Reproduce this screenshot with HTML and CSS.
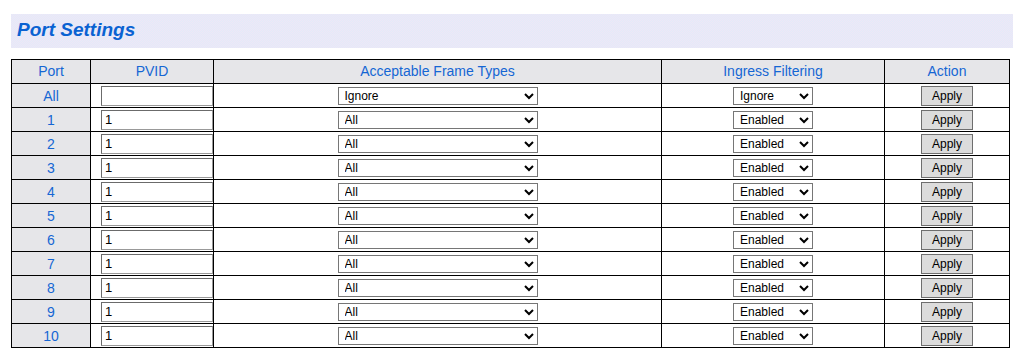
FILE: index.html
```html
<!DOCTYPE html>
<html>
<head>
<meta charset="utf-8">
<link rel="stylesheet" href="styles.css">
</head>
<body>
<div class="page">
  <div class="title-bar"><h1 class="title">Port Settings</h1></div>
  <table class="ports">
    <colgroup>
      <col class="c-port"><col class="c-pvid"><col class="c-aft"><col class="c-ing"><col class="c-act">
    </colgroup>
    <thead>
      <tr>
        <th>Port</th><th>PVID</th><th>Acceptable Frame Types</th><th>Ingress Filtering</th><th>Action</th>
      </tr>
    </thead>
    <tbody>
      <tr>
        <td class="port">All</td>
        <td class="pvid"><input class="txt" type="text" value=""></td>
        <td class="mid"><select class="sel-aft"><option>Ignore</option><option>All</option><option>Tagged Only</option><option>Untagged Only</option></select></td>
        <td class="mid"><select class="sel-ing"><option>Ignore</option><option>Enabled</option><option>Disabled</option></select></td>
        <td class="mid"><button class="btn">Apply</button></td>
      </tr>
      <tr><td class="port">1</td><td class="pvid"><input class="txt" type="text" value="1"></td><td class="mid"><select class="sel-aft"><option>All</option></select></td><td class="mid"><select class="sel-ing"><option>Enabled</option></select></td><td class="mid"><button class="btn">Apply</button></td></tr>
      <tr><td class="port">2</td><td class="pvid"><input class="txt" type="text" value="1"></td><td class="mid"><select class="sel-aft"><option>All</option></select></td><td class="mid"><select class="sel-ing"><option>Enabled</option></select></td><td class="mid"><button class="btn">Apply</button></td></tr>
      <tr><td class="port">3</td><td class="pvid"><input class="txt" type="text" value="1"></td><td class="mid"><select class="sel-aft"><option>All</option></select></td><td class="mid"><select class="sel-ing"><option>Enabled</option></select></td><td class="mid"><button class="btn">Apply</button></td></tr>
      <tr><td class="port">4</td><td class="pvid"><input class="txt" type="text" value="1"></td><td class="mid"><select class="sel-aft"><option>All</option></select></td><td class="mid"><select class="sel-ing"><option>Enabled</option></select></td><td class="mid"><button class="btn">Apply</button></td></tr>
      <tr><td class="port">5</td><td class="pvid"><input class="txt" type="text" value="1"></td><td class="mid"><select class="sel-aft"><option>All</option></select></td><td class="mid"><select class="sel-ing"><option>Enabled</option></select></td><td class="mid"><button class="btn">Apply</button></td></tr>
      <tr><td class="port">6</td><td class="pvid"><input class="txt" type="text" value="1"></td><td class="mid"><select class="sel-aft"><option>All</option></select></td><td class="mid"><select class="sel-ing"><option>Enabled</option></select></td><td class="mid"><button class="btn">Apply</button></td></tr>
      <tr><td class="port">7</td><td class="pvid"><input class="txt" type="text" value="1"></td><td class="mid"><select class="sel-aft"><option>All</option></select></td><td class="mid"><select class="sel-ing"><option>Enabled</option></select></td><td class="mid"><button class="btn">Apply</button></td></tr>
      <tr><td class="port">8</td><td class="pvid"><input class="txt" type="text" value="1"></td><td class="mid"><select class="sel-aft"><option>All</option></select></td><td class="mid"><select class="sel-ing"><option>Enabled</option></select></td><td class="mid"><button class="btn">Apply</button></td></tr>
      <tr><td class="port">9</td><td class="pvid"><input class="txt" type="text" value="1"></td><td class="mid"><select class="sel-aft"><option>All</option></select></td><td class="mid"><select class="sel-ing"><option>Enabled</option></select></td><td class="mid"><button class="btn">Apply</button></td></tr>
      <tr><td class="port">10</td><td class="pvid"><input class="txt" type="text" value="1"></td><td class="mid"><select class="sel-aft"><option>All</option></select></td><td class="mid"><select class="sel-ing"><option>Enabled</option></select></td><td class="mid"><button class="btn">Apply</button></td></tr>
    </tbody>
  </table>
</div>
</body>
</html>
```

FILE: styles.css
```css
html, body {
  margin: 0;
  padding: 0;
  background: #ffffff;
}

body {
  font-family: "Liberation Sans", Arial, sans-serif;
}

.page {
  padding: 14px 7px 0 11px;
}

.title-bar {
  box-sizing: border-box;
  height: 34px;
  display: flex;
  align-items: center;
  padding: 0 0 3px 6px;
  background-color: #e9e8f7;
  background-image: conic-gradient(#efe6f6 0 25%, #e2ebf9 0 50%, #efe6f6 0 75%, #e2ebf9 0);
  background-size: 2px 2px;
}

.title {
  margin: 0;
  font-size: 19px;
  font-weight: bold;
  font-style: italic;
  color: #0a62d2;
  line-height: 1;
}

.ports {
  margin-top: 11px;
  border-collapse: collapse;
  table-layout: fixed;
  width: 998px;
}

.c-port { width: 79px; }
.c-pvid { width: 123px; }
.c-aft { width: 448px; }
.c-ing { width: 223px; }
.c-act { width: 125px; }

.ports th,
.ports td {
  border: 1px solid #000;
  height: 23px;
  padding: 0;
  text-align: center;
  vertical-align: middle;
}

.ports th {
  height: 21px;
  padding-bottom: 2px;
  font-weight: normal;
  font-size: 14px;
  color: #1566d4;
  background-color: #e5e5ea;
  background-image: conic-gradient(#ececec 0 25%, #dfdfe6 0 50%, #ececec 0 75%, #dfdfe6 0);
  background-size: 2px 2px;
}

.ports td.port {
  font-size: 14px;
  color: #1566d4;
  background-color: #e6e6ea;
  background-image: conic-gradient(#ececec 0 25%, #dfdfe6 0 50%, #ececec 0 75%, #dfdfe6 0);
  background-size: 2px 2px;
}

.ports td.pvid {
  text-align: left;
  padding-left: 10px;
  overflow: visible;
}

.txt {
  box-sizing: border-box;
  display: block;
  width: 112px;
  height: 20px;
  margin: 0;
  padding: 1px 3px;
  border: 1px solid #6b6b6b;
  border-right-color: #999;
  border-bottom-color: #999;
  font-family: "Liberation Sans", Arial, sans-serif;
  font-size: 13px;
  color: #000;
  background: #fff;
  outline: none;
  caret-color: transparent;
}

select {
  box-sizing: border-box;
  height: 18px;
  margin: 0;
  padding: 0 0 0 2px;
  border: 1px solid #767676;
  border-radius: 0;
  font-family: "Liberation Sans", Arial, sans-serif;
  font-size: 12px;
  color: #000;
  background-color: #fff;
  vertical-align: middle;
}

.sel-aft { width: 200px; }
.sel-ing { width: 80px; }

.btn {
  box-sizing: border-box;
  width: 52px;
  height: 20px;
  margin: 0;
  padding: 0;
  border: 1px solid #6e6e6e;
  border-radius: 0;
  background-color: #dcdcdc;
  font-family: "Liberation Sans", Arial, sans-serif;
  font-size: 12px;
  color: #000;
  vertical-align: middle;
}
```
